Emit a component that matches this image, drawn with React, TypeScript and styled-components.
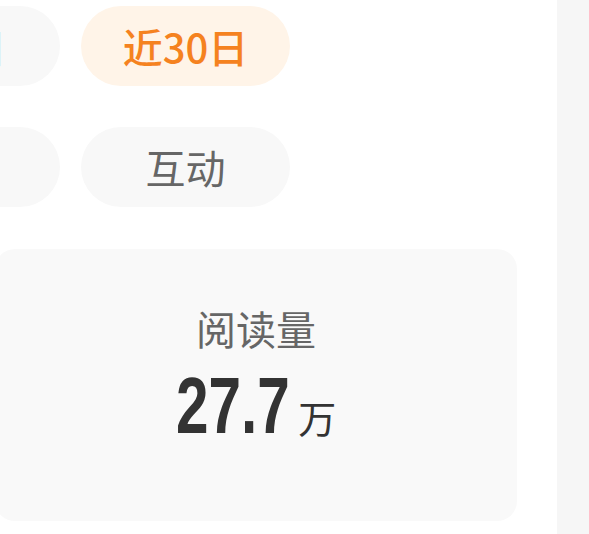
import React from "react";
import styled, { createGlobalStyle } from "styled-components";

const GlobalStyle = createGlobalStyle`
  html, body {
    margin: 0;
    padding: 0;
    background: #f6f6f6;
  }
  body {
    font-family: "Noto Sans CJK SC", "Noto Sans", sans-serif;
  }
`;

const Page = styled.div`
  display: flex;
  width: 589px;
  height: 534px;
  overflow: hidden;
`;

const Panel = styled.div`
  flex: 0 0 557px;
  background: #fff;
  overflow: hidden;
  padding-top: 6px;
  box-sizing: border-box;
`;

const Side = styled.div`
  flex: 1;
  background: #f6f6f6;
`;

const PillGrid = styled.div`
  display: grid;
  grid-template-columns: repeat(2, 209px);
  column-gap: 21px;
  row-gap: 41px;
  margin-left: -149px;
`;

const Pill = styled.div<{ $active?: boolean }>`
  height: 80px;
  border-radius: 40px;
  display: flex;
  align-items: center;
  justify-content: center;
  font-size: 40px;
  font-weight: ${(p) => (p.$active ? 500 : 400)};
  color: ${(p) => (p.$active ? "#f5821f" : "#666")};
  background: ${(p) => (p.$active ? "#fff4e8" : "#f8f8f8")};
`;

const Card = styled.div`
  margin-top: 42px;
  margin-left: -5px;
  width: 522px;
  height: 272px;
  border-radius: 20px;
  background: #f9f9f9;
  display: flex;
  flex-direction: column;
  align-items: center;
  padding-top: 55px;
  box-sizing: border-box;
`;

const Label = styled.div`
  font-size: 40px;
  line-height: 48px;
  color: #666;
`;

const Value = styled.div`
  display: flex;
  align-items: baseline;
  color: #333;
  margin-top: 14px;
  line-height: 80px;
`;

// condensed digits: no narrow face is installed, so squeeze Liberation Sans
const Number = styled.span`
  display: inline-block;
  font-family: "Liberation Sans", Arial, sans-serif;
  font-weight: 700;
  font-size: 80px;
  transform: scaleX(0.73);
  margin: 0 -21px;
`;

const Unit = styled.span`
  font-size: 38px;
  line-height: 1;
  margin-left: 9px;
`;

const pills = [
  { label: "近7日", active: false },
  { label: "近30日", active: true },
  { label: "阅读", active: false },
  { label: "互动", active: false },
];

export default function App() {
  return (
    <>
      <GlobalStyle />
      <Page>
        <Panel>
          <PillGrid>
            {pills.map((p) => (
              <Pill key={p.label} $active={p.active}>
                {p.label}
              </Pill>
            ))}
          </PillGrid>
          <Card>
            <Label>阅读量</Label>
            <Value>
              <Number>27.7</Number>
              <Unit>万</Unit>
            </Value>
          </Card>
        </Panel>
        <Side />
      </Page>
    </>
  );
}
